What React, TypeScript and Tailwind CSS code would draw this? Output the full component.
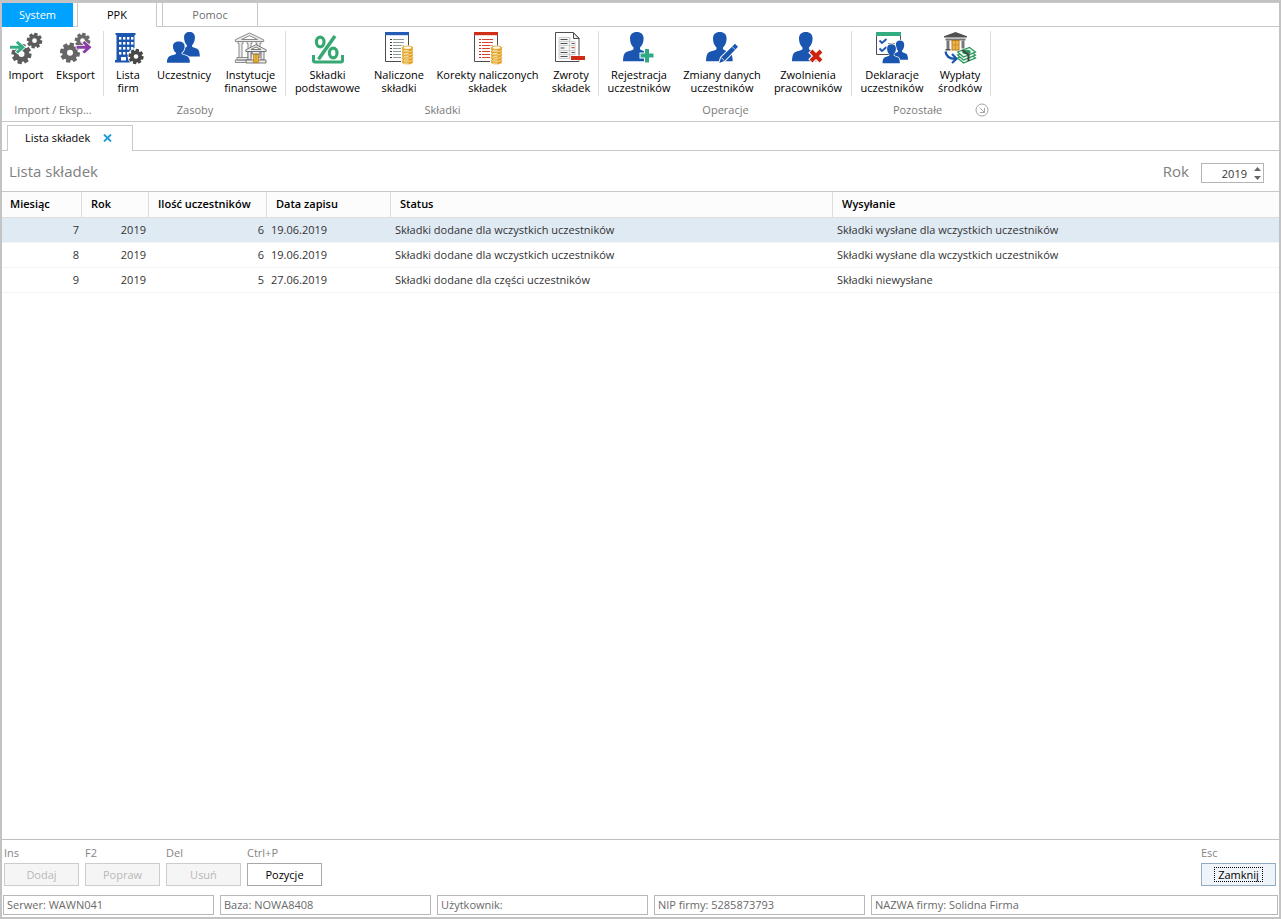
import { useState } from "react";
import type { ReactNode } from "react";
import clsx from "clsx";

const BLUE = "#1a55b0";

function Icon({ children }: { children: ReactNode }) {
  return (
    <svg viewBox="0 0 32 32" className="h-8 w-8 shrink-0 overflow-visible" fill="none" aria-hidden="true">
      {children}
    </svg>
  );
}

function Gear({ cx, cy, r, color = "#5c5c5c" }: { cx: number; cy: number; r: number; color?: string }) {
  return (
    <g transform={`translate(${cx} ${cy}) scale(${r / 10})`}>
      {[0, 45, 90, 135].map((a) => (
        <rect key={a} x={-2.2} y={-10} width={4.4} height={20} rx={0.5} fill={color} transform={`rotate(${a + 12})`} />
      ))}
      <circle r={7.8} fill={color} />
      <circle r={3} fill="#fff" />
    </g>
  );
}

function Person({ x, y, sx, sy }: { x: number; y: number; sx: number; sy: number }) {
  return (
    <path
      transform={`translate(${x} ${y}) scale(${sx} ${sy})`}
      d="M0-7.3c4.2 0 6.8 2.4 6.8 6.4 0 3.8-1.4 7-3.6 9.2v1.6c1 1.2 4.6 1.8 6.8 3 2 1.2 2.9 4.6 2.9 9H-13.8c0-4.4.9-7.8 2.9-9 2.2-1.2 6.6-1.8 7.6-3V8.3C-5.5 6.1-6.8 2.9-6.8-.9c0-4 2.6-6.4 6.8-6.4z"
      fill={BLUE}
      stroke="#fff"
      strokeWidth={2}
      paintOrder="stroke"
    />
  );
}

function Arrow({ x, y, color }: { x: number; y: number; color: string }) {
  return (
    <g transform={`translate(${x} ${y})`}>
      <path d="M0-1.5h9L5.8-4.5 8-6.200 15 0 8 6.200 5.800 4.500 9 1.500H0z" fill={color} stroke="#fff" strokeWidth={1.5} paintOrder="stroke" />
    </g>
  );
}

function Coins() {
  return (
    <g>
      {[28.6, 25.4, 22.2, 19, 15.8].map((y) => (
        <g key={y}>
          <path d={`M19 ${y}v1.6c0 1.6 2.5 2.3 5.5 2.3s5.5-.7 5.5-2.3V${y}z`} fill="#e0a020" stroke="#fff" strokeWidth={0.5} />
          <ellipse cx={24.5} cy={y} rx={5.4} ry={1.8} fill="#f0b945" stroke="#d99a1c" strokeWidth={0.7} />
          <path d={`M21 ${y + 2.5}h4.5`} stroke="#fff1c9" strokeWidth={0.8} />
        </g>
      ))}
      <ellipse cx={24.5} cy={15.7} rx={3.6} ry={1.1} fill="#fff" />
    </g>
  );
}

function SheetWithCoins({ head, dot, line }: { head: string; dot: string; line: string }) {
  return (
    <Icon>
      <path d="M2.5 2v27.5h23V2" fill="#fff" stroke="#4d4d4d" />
      <rect x={2} width={24} height={3.2} fill={head} />
      {[7, 10, 13, 16, 19, 22, 25].map((y) => (
        <g key={y}>
          <rect x={7} y={y} width={2} height={1} fill={dot} />
          <rect x={10} y={y} width={11} height={1} fill={line} />
        </g>
      ))}
      <rect x={18} y={13.5} width={13} height={18} fill="#fff" />
      <Coins />
    </Icon>
  );
}

const ImportIcon = () => (
  <Icon>
    <Gear cx={11.5} cy={22} r={10} />
    <Gear cx={24.5} cy={8.7} r={7.8} />
    <Arrow x={0} y={15.3} color="#33ad86" />
  </Icon>
);

const ExportIcon = () => (
  <Icon>
    <Gear cx={22.5} cy={8.7} r={7.8} color="#6b6b6b" />
    <Gear cx={10} cy={20.7} r={10} color="#666666" />
    <Arrow x={16.5} y={15.3} color="#8a3da6" />
  </Icon>
);

const CompaniesIcon = () => (
  <Icon>
    <path d="M3.5 1h20v2h-1v25h2.5v2.5H3V28h1.5V3h-1z" fill={BLUE} />
    {[5, 10, 15, 20].map((y) =>
      [7, 11, 15, 19].map((x) => <rect key={`${x}-${y}`} x={x} y={y} width={2.4} height={2.6} fill="#fff" />)
    )}
    <rect x={9} y={25} width={5} height={3.5} fill="#fff" />
    <circle cx={24} cy={24.5} r={8.4} fill="#fff" />
    <Gear cx={24} cy={24.5} r={7.6} color="#484848" />
  </Icon>
);

const PeopleIcon = () => (
  <Icon>
    <Person x={21.5} y={6.2} sx={0.8} sy={0.84} />
    <Person x={10.8} y={14.8} sx={0.86} sy={0.73} />
  </Icon>
);

const BankIcon = () => (
  <Icon>
    <g stroke="#8a8a8a" strokeWidth={1} fill="#ececec">
      <path d="M.3 9.5V7.8L14.5 1l14.200 6.800v1.700z" />
      <path d="M6.500 7.500 14.500 3.700l8 3.800z" fill="#fff" />
      <path d="M3 9.500h5v2H7v14H4v-14H3zM12 9.500h5v2h-1v14h-3v-14h-1zM21 9.500h5v2h-1v14h-3v-14h-1z" />
      <path d="M2 25.500h13V28H2zM.3 28h14v2.500H.3z" />
    </g>
    <g stroke="#6c6c6c" strokeWidth={0.9} fill="#ececec">
      <path d="M10.800 19.500v-1.700L21 12.700l10.200 5.100v1.700z" />
      <path d="M16 17.500l5-2.500 5 2.500z" fill="#fff" />
      <path d="M13 19.500h3V28h-3zM26 19.500h3V28h-3z" />
      <path d="M11 28h20v3H11z" />
      <path d="M17 19.500h8V22h-8z" />
    </g>
    <path d="M18.400 22.500h5.200v8h-5.200z" fill="#eeb23c" stroke="#a87412" strokeWidth={0.7} />
    <path d="M21 22.500v8" stroke="#a87412" strokeWidth={0.5} />
  </Icon>
);

const PercentIcon = () => (
  <Icon>
    <g stroke="#37a872">
      <ellipse cx={8.2} cy={10} rx={3.8} ry={4.8} strokeWidth={3.2} />
      <ellipse cx={21.2} cy={21} rx={3.8} ry={4.8} strokeWidth={3.2} />
      <path d="M23 4 6.5 27.300" strokeWidth={3.500} />
      <path d="M1.500 23v5.500q0 1.500 1.500 1.500h26q1.500 0 1.500-1.500V23" strokeWidth={3} />
    </g>
  </Icon>
);

const ReturnsIcon = () => (
  <Icon>
    <path d="M.5.5h18L24 6v23.500H.5z" fill="#fff" stroke="#4d4d4d" />
    <path d="M18.500.8v5.700H24z" fill="#f0f0f0" stroke="#4d4d4d" />
    <path d="M4 5.500h11v4h5v13.500h-5v3.500H4z" fill="#f6f6f6" stroke="#cfcfcf" />
    <path d="M4 9.500h16M4 13.500h16M4 18.500h16M4 22.500h16M14.500 5v22" stroke="#cfcfcf" />
    <path d="M5.500 7.500h7M5.500 11.500h7M5.500 16h4M5.500 20.500h7M5.500 24.500h7M16.500 11.500h3M16.500 20.500h3" stroke="#505050" />
    <path d="M16.500 15.700h3" stroke="#cf2a15" />
    <rect x={15.5} y={23.5} width={15} height={5} fill="#fff" />
    <rect x={16} y={24} width={14} height={4} fill="#cf2a15" />
  </Icon>
);

const PersonAddIcon = () => (
  <Icon>
    <Person x={13.8} y={7.3} sx={1} sy={1} />
    <path d="M22 17h4v4.5h4.5v4H26v5h-4v-5h-4.500v-4H22z" fill="#2faa84" stroke="#fff" strokeWidth={2} paintOrder="stroke" />
  </Icon>
);

const PersonEditIcon = () => (
  <Icon>
    <Person x={13.8} y={7.3} sx={1} sy={1} />
    <path d="M13.300 31l1.700-5.500L29 11.800l3 3L18.500 29z" fill={BLUE} stroke="#fff" strokeWidth={2} paintOrder="stroke" />
    <path d="M26 14.500l3.200 3.200M15.300 25.500l3 3.200" stroke="#fff" strokeWidth={0.8} />
  </Icon>
);

const PersonRemoveIcon = () => (
  <Icon>
    <Person x={13.8} y={7.3} sx={1} sy={1} />
    <path d="M18.500 18.500l11 11M29.500 18.500l-11 11" strokeWidth={6.5} stroke="#fff" />
    <path d="M19 19l10 10M29 19 19 29" strokeWidth={4} stroke="#cd2410" />
  </Icon>
);

const DeclarationsIcon = () => (
  <Icon>
    <path d="M.5 2v20.500h24V2" fill="#fff" stroke="#4d4d4d" />
    <rect width={25} height={4} fill="#35ab80" />
    <path d="M3.500 8.500 6 11l4.500-4M3.500 16.500 6 19l4.500-4" stroke={BLUE} strokeWidth={1.800} />
    <path d="M12 11.500h7" stroke="#777" strokeWidth={0.8} />
    <Person x={24} y={13.3} sx={0.62} sy={0.66} />
    <Person x={15.5} y={17} sx={0.65} sy={0.65} />
  </Icon>
);

const PayoutsIcon = () => (
  <Icon>
    <path d="M0 5.500V4.200L11.500 0 23 4.200v1.300z" fill="#505050" />
    <path d="M1.500 6.500h20v2h-20z" fill="#777" />
    <path d="M2.500 8.500h3v9h-3zM17.500 8.500h3v8h-3z" fill="#777" />
    <path d="M1.500 17h5v1.500h-5z" fill="#505050" />
    <rect x={8} y={8.5} width={7} height={9.5} fill="#edb449" stroke="#b87a1c" />
    <path d="M11.500 9v9M8.500 13h6" stroke="#b87a1c" strokeWidth={0.6} />
    <path d="M1.500 19.500q1 7.300 9.500 7.300M8 22l4.600 4.700L8 31" stroke={BLUE} strokeWidth={2.200} />
    {[6, 3, 0].map((d) => (
      <path key={d} d={`M13.500 ${20 + d} 25.500 ${15.5 + d} 31.500 ${20 + d} 19.500 ${25 + d}z`} fill="#e7f5ec" stroke="#28975c" strokeWidth={1.2} />
    ))}
    <ellipse cx={22.5} cy={20} rx={4.2} ry={2.2} fill="#28975c" />
    <path d="M19 17.800 25.500 22.300v6.500l-2 .8v-6.300L17 18.600z" fill="#454545" />
  </Icon>
);

interface RibbonItem {
  lines: string[];
  icon: ReactNode;
  width: string;
}

interface RibbonGroup {
  label: string;
  items: RibbonItem[];
  launcher?: boolean;
}

const groups: RibbonGroup[] = [
  {
    label: "Import / Eksp...",
    items: [
      { lines: ["Import"], icon: <ImportIcon />, width: "w-[46px]" },
      { lines: ["Eksport"], icon: <ExportIcon />, width: "w-[53px]" },
    ],
  },
  {
    label: "Zasoby",
    items: [
      { lines: ["Lista", "firm"], icon: <CompaniesIcon />, width: "w-[46px]" },
      { lines: ["Uczestnicy"], icon: <PeopleIcon />, width: "w-[66px]" },
      { lines: ["Instytucje", "finansowe"], icon: <BankIcon />, width: "w-[67px]" },
    ],
  },
  {
    label: "Składki",
    items: [
      { lines: ["Składki", "podstawowe"], icon: <PercentIcon />, width: "w-[81px]" },
      {
        lines: ["Naliczone", "składki"],
        icon: <SheetWithCoins head="#235cb4" dot="#3a3a3a" line="#8e9a94" />,
        width: "w-[62px]",
      },
      {
        lines: ["Korekty naliczonych", "składek"],
        icon: <SheetWithCoins head="#cf2f17" dot="#cf2f17" line="#d4452f" />,
        width: "w-[115px]",
      },
      { lines: ["Zwroty", "składek"], icon: <ReturnsIcon />, width: "w-[52px]" },
    ],
  },
  {
    label: "Operacje",
    items: [
      { lines: ["Rejestracja", "uczestników"], icon: <PersonAddIcon />, width: "w-[78px]" },
      { lines: ["Zmiany danych", "uczestników"], icon: <PersonEditIcon />, width: "w-[88px]" },
      { lines: ["Zwolnienia", "pracowników"], icon: <PersonRemoveIcon />, width: "w-[84px]" },
    ],
  },
  {
    label: "Pozostałe",
    launcher: true,
    items: [
      { lines: ["Deklaracje", "uczestników"], icon: <DeclarationsIcon />, width: "w-[78px]" },
      { lines: ["Wypłaty", "środków"], icon: <PayoutsIcon />, width: "w-[58px]" },
    ],
  },
];

const columns = [
  { label: "Miesiąc", width: "w-[80px]" },
  { label: "Rok", width: "w-[67px]" },
  { label: "Ilość uczestników", width: "w-[118px]" },
  { label: "Data zapisu", width: "w-[124px]" },
  { label: "Status", width: "w-[442px]" },
  { label: "Wysyłanie", width: "" },
];

const rows = [
  {
    month: 7,
    year: 2019,
    count: 6,
    date: "19.06.2019",
    status: "Składki dodane dla wczystkich uczestników",
    sent: "Składki wysłane dla wczystkich uczestników",
  },
  {
    month: 8,
    year: 2019,
    count: 6,
    date: "19.06.2019",
    status: "Składki dodane dla wczystkich uczestników",
    sent: "Składki wysłane dla wczystkich uczestników",
  },
  {
    month: 9,
    year: 2019,
    count: 5,
    date: "27.06.2019",
    status: "Składki dodane dla części uczestników",
    sent: "Składki niewysłane",
  },
];

const actions = [
  { key: "Ins", label: "Dodaj", disabled: true },
  { key: "F2", label: "Popraw", disabled: true },
  { key: "Del", label: "Usuń", disabled: true },
  { key: "Ctrl+P", label: "Pozycje", disabled: false },
];

const statusFields = ["Serwer: WAWN041", "Baza: NOWA8408", "Użytkownik:", "NIP firmy: 5285873793"];

function MenuTabs() {
  return (
    <nav className="flex h-[25px] shrink-0 border-t border-[#c8c8c8] text-center">
      <button className="w-[71px] bg-[#00a2ff] pb-0.5 text-white">System</button>
      <div className="w-1 border-b border-[#c8c8c8]" />
      <button className="w-20 border-x border-[#c8c8c8] pb-0.5 text-black">PPK</button>
      <div className="w-[5px] border-b border-[#c8c8c8]" />
      <button className="w-24 border-x border-b border-[#c8c8c8] text-[#6e6e6e]">Pomoc</button>
      <div className="flex-1 border-b border-[#c8c8c8]" />
    </nav>
  );
}

function Ribbon() {
  return (
    <div className="flex h-[95px] shrink-0 border-b border-[#c8c8c8] pt-1">
      {groups.map((group) => (
        <section key={group.label} className="flex flex-col">
          <div className="flex h-[65px] border-r border-[#dcdcdc] px-px">
            {group.items.map((item) => (
              <button key={item.lines[0]} className={clsx("flex flex-col items-center pt-px text-black", item.width)}>
                {item.icon}
                <span className="pt-1 leading-[13px] whitespace-nowrap">
                  {item.lines.map((line) => (
                    <span key={line} className="block">
                      {line}
                    </span>
                  ))}
                </span>
              </button>
            ))}
          </div>
          <div className="flex flex-1 items-center pt-0.5 text-[#7a7a7a]">
            <span className={clsx("flex-1 text-center", group.launcher && "pl-2")}>{group.label}</span>
            {group.launcher && (
              <button aria-label="Więcej" className="pr-0.5">
                <svg viewBox="0 0 14 14" className="h-[14px] w-[14px]" fill="none" stroke="#a3a3a3">
                  <circle cx="7" cy="7" r="6" />
                  <path d="M4.500 4.500l4.800 4.800M9.500 5v4.500H5" />
                </svg>
              </button>
            )}
          </div>
        </section>
      ))}
    </div>
  );
}

function DocumentTabs() {
  return (
    <div className="flex h-[29px] shrink-0">
      <div className="w-[5px] border-b border-[#c8c8c8]" />
      <div className="mt-[3px] flex w-[126px] items-center gap-[13px] border-x border-t border-[#c8c8c8] pb-0.5 pl-[17px] text-black">
        <span>Lista składek</span>
        <button aria-label="Zamknij kartę">
          <svg viewBox="0 0 9 8" className="h-2 w-[9px]" stroke="#1a9ad7" strokeWidth="1.8">
            <path d="M1 .5l7 7M8 .5l-7 7" />
          </svg>
        </button>
      </div>
      <div className="flex-1 border-b border-[#c8c8c8]" />
    </div>
  );
}

function YearField() {
  const [year, setYear] = useState(2019);

  return (
    <div className="flex items-center gap-3">
      <label htmlFor="rok" className="text-[15px] font-medium">
        Rok
      </label>
      <div className="mt-1 flex h-5 w-[63px] items-center border border-[#b4b4b4] bg-white">
        <input
          id="rok"
          type="number"
          value={year}
          onChange={(e) => setYear(Number(e.target.value))}
          className="w-[45px] min-w-0 [appearance:textfield] text-right text-[#333333] outline-none [&::-webkit-inner-spin-button]:appearance-none"
        />
        <div className="flex flex-1 flex-col items-center gap-[5px] pl-1">
          <button aria-label="Następny rok" onClick={() => setYear(year + 1)}>
            <svg viewBox="0 0 7 4" className="block h-1 w-[7px]" fill="#666">
              <path d="M3.500 0 7 4H0z" />
            </svg>
          </button>
          <button aria-label="Poprzedni rok" onClick={() => setYear(year - 1)}>
            <svg viewBox="0 0 7 4" className="block h-1 w-[7px]" fill="#666">
              <path d="M3.500 4 7 0H0z" />
            </svg>
          </button>
        </div>
      </div>
    </div>
  );
}

function ContributionsTable() {
  const [selected, setSelected] = useState(0);

  return (
    <table className="w-full table-fixed border-separate border-spacing-0 text-left">
      <thead>
        <tr className="h-[26px] bg-[#fcfcfc] text-black">
          {columns.map((col) => (
            <th
              key={col.label}
              className={clsx(
                "border-r border-b border-[#dedede] p-0 pb-0.5 pl-2 font-semibold last:border-r-0 not-first:pl-[9px]",
                col.width
              )}
            >
              {col.label}
            </th>
          ))}
        </tr>
      </thead>
      <tbody className="text-[#333333] [&_td]:border-b [&_td]:border-[#f3f3f3] [&_td]:p-0 [&_td]:pb-0.5">
        {rows.map((row, i) => (
          <tr key={row.month} onClick={() => setSelected(i)} className={clsx("h-[25px]", i === selected && "bg-[#e0eaf3]")}>
            <td>
              <div className="pr-[3px] text-right">{row.month}</div>
            </td>
            <td>
              <div className="pr-[3px] text-right">{row.year}</div>
            </td>
            <td>
              <div className="pr-[3px] text-right">{row.count}</div>
            </td>
            <td>
              <div className="pl-1">{row.date}</div>
            </td>
            <td>
              <div className="pl-1">{row.status}</div>
            </td>
            <td>
              <div className="pl-1">{row.sent}</div>
            </td>
          </tr>
        ))}
      </tbody>
    </table>
  );
}

function ActionBar() {
  return (
    <div className="flex gap-1.5 border-t border-[#c0c0c0] px-0.5 pt-1.5 pb-[9px]">
      {actions.map((action) => (
        <div key={action.key} className="w-[75px]">
          <div className="h-[17px] leading-[14px] text-[#858585]">{action.key}</div>
          <button
            disabled={action.disabled}
            className={clsx(
              "h-[23px] w-full border",
              action.disabled ? "border-[#cccccc] bg-[#f5f5f5] text-[#b8b8b8]" : "border-[#a8a8a8] bg-white text-black"
            )}
          >
            {action.label}
          </button>
        </div>
      ))}
      <div className="mr-px ml-auto w-[75px]">
        <div className="h-[17px] leading-[14px] text-[#858585]">Esc</div>
        <button className="flex h-[23px] w-full items-center justify-center border border-[#93abc2] bg-[#eef4fa] text-black">
          <span className="border border-dotted border-black px-[3px] leading-[13px]">Zamknij</span>
        </button>
      </div>
    </div>
  );
}

function StatusBar() {
  return (
    <footer className="flex gap-1.5 px-px pb-0.5 text-[#6a6a6a]">
      {statusFields.map((field) => (
        <div key={field} className="h-5 w-[211px] border border-[#b8b8b8] pl-[3px] leading-[18px]">
          {field}
        </div>
      ))}
      <div className="h-5 flex-1 border border-[#b8b8b8] pl-[3px] leading-[18px]">NAZWA firmy: Solidna Firma</div>
    </footer>
  );
}

export default function App() {
  return (
    <div className="flex min-h-screen flex-col border-2 border-[#c3c3c3] bg-white font-['Open_Sans','Noto_Sans',sans-serif] text-[11px] leading-[15px]">
      <MenuTabs />
      <Ribbon />
      <DocumentTabs />
      <main className="flex flex-1 flex-col">
        <header className="flex h-[41px] items-center justify-between border-b border-[#c8c8c8] pr-[15px] pl-[7px] text-[#808080]">
          <h1 className="text-[15px] font-medium">Lista składek</h1>
          <YearField />
        </header>
        <ContributionsTable />
      </main>
      <ActionBar />
      <StatusBar />
    </div>
  );
}
